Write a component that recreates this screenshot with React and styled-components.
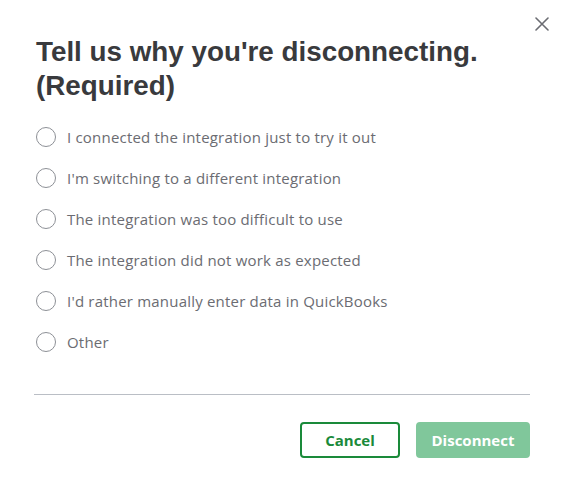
import React from "react";
import styled, { createGlobalStyle } from "styled-components";

const Global = createGlobalStyle`
  html, body { margin: 0; padding: 0; background: #fff; }
  body { font-family: "Open Sans", "Liberation Sans", sans-serif; }
`;

const Dialog = styled.div`
  position: relative;
  width: 563px;
  height: 492px;
  box-sizing: border-box;
  padding: 35px 33px 0 34px;
  background: #fff;
`;

const Close = styled.button`
  position: absolute;
  top: 15px;
  right: 12px;
  width: 18px;
  height: 18px;
  padding: 0;
  border: 0;
  background: none;
  color: #6b6c72;
  display: flex;
  align-items: center;
  justify-content: center;
`;

const Title = styled.h1`
  margin: 0 0 0 2px;
  font-family: "Liberation Sans", Arial, sans-serif;
  font-weight: 700;
  font-size: 27.8px;
  line-height: 34px;
  color: #393a3d;
`;

const Options = styled.div`
  display: flex;
  flex-direction: column;
  gap: 21px;
  margin-top: 24px;
  padding-left: 2px;
`;

const Option = styled.label`
  display: flex;
  align-items: center;
  gap: 11px;
  height: 20px;
  font-size: 15px;
  letter-spacing: 0.2px;
  color: #6b6c72;
`;

const Circle = styled.span`
  width: 18px;
  height: 18px;
  border: 1px solid #8d9096;
  border-radius: 50%;
  flex: none;
`;

const Divider = styled.hr`
  margin: 42px 0 0 0;
  border: 0;
  border-top: 1px solid #babec5;
`;

const Footer = styled.div`
  display: flex;
  justify-content: flex-end;
  gap: 16px;
  margin-top: 27px;
`;

const Button = styled.button`
  height: 36px;
  box-sizing: border-box;
  border-radius: 4px;
  font-family: "Open Sans", "Liberation Sans", sans-serif;
  font-weight: 700;
  font-size: 15px;
  padding: 0;
  width: ${(p) => p.$w}px;
  border: 2px solid ${(p) => (p.$primary ? "#80c79b" : "#1a8a3a")};
  background: ${(p) => (p.$primary ? "#80c79b" : "#fff")};
  color: ${(p) => (p.$primary ? "#fff" : "#1a8a3a")};
`;

const reasons = [
  "I connected the integration just to try it out",
  "I'm switching to a different integration",
  "The integration was too difficult to use",
  "The integration did not work as expected",
  "I'd rather manually enter data in QuickBooks",
  "Other",
];

export default function App() {
  return (
    <>
      <Global />
      <Dialog>
        <Close aria-label="Close">
          <svg width="14" height="14" viewBox="0 0 14 14">
            <path d="M1 1L13 13M13 1L1 13" stroke="currentColor" strokeWidth="1.6" strokeLinecap="round" />
          </svg>
        </Close>
        <Title>
          Tell us why you're disconnecting.
          <br />
          (Required)
        </Title>
        <Options>
          {reasons.map((r) => (
            <Option key={r}>
              <Circle />
              {r}
            </Option>
          ))}
        </Options>
        <Divider />
        <Footer>
          <Button $w={100}>Cancel</Button>
          <Button $primary $w={114}>Disconnect</Button>
        </Footer>
      </Dialog>
    </>
  );
}
